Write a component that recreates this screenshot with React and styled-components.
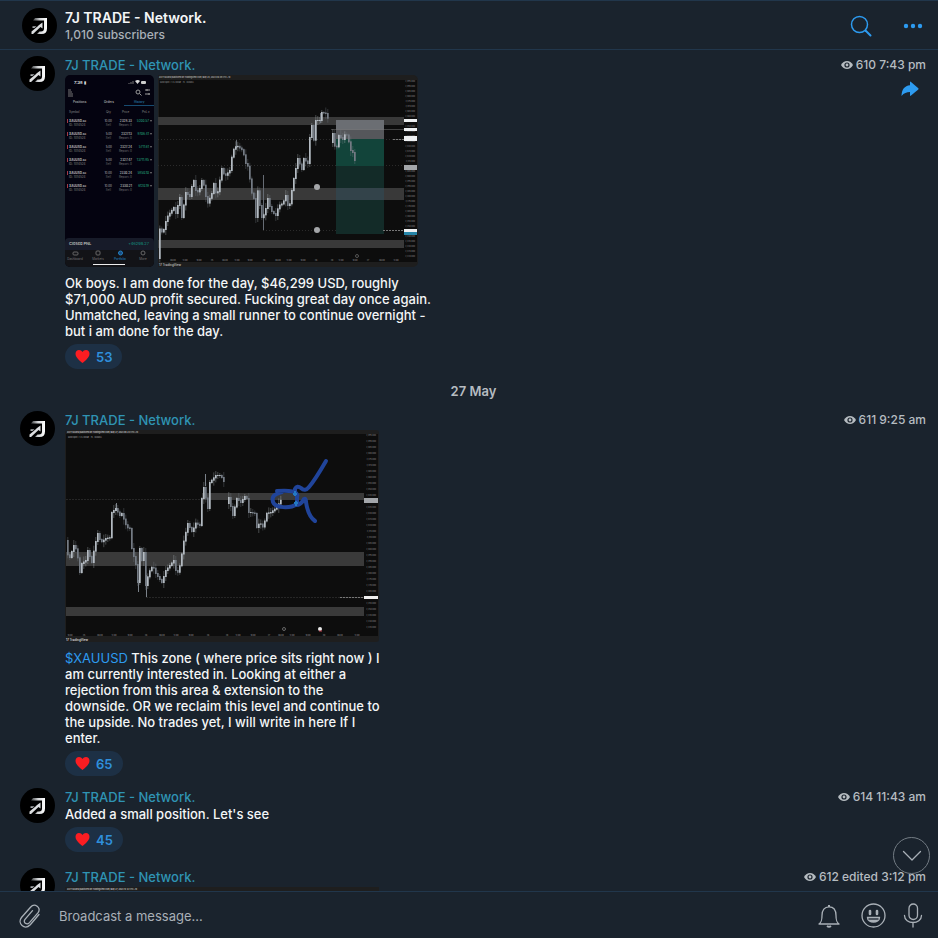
import React from "react";
import styled, { createGlobalStyle } from "styled-components";

const c = {
  bg: "#1a232d",
  line: "#21364b",
  teal: "#2f94b4",
  blue: "#2d9bf0",
  pale: "#a9b0b7",
  white: "#f4f6f7",
};

const GlobalStyle = createGlobalStyle`
  * { box-sizing: border-box; }
  body {
    margin: 0;
    background: ${c.bg};
    color: ${c.white};
    font-family: Inter, "Liberation Sans", sans-serif;
    font-size: 13px;
    line-height: 16px;
  }
  button, input { font: inherit; color: inherit; }
  p, h1, h2 { margin: 0; }
`;

const Page = styled.main`
  display: flex;
  flex-direction: column;
  height: 100vh;
`;

const Header = styled.header`
  display: flex;
  align-items: center;
  gap: 8px;
  flex: none;
  height: 50px;
  padding: 1px 11px 0 22px;
  border-top: 1px solid ${c.line};
  border-bottom: 1px solid ${c.line};
`;

const Heading = styled.div`
  flex: 1;
  min-width: 0;
`;

const Title = styled.h1`
  font-size: 14px;
  line-height: 18px;
  font-weight: 600;
`;

const Subtitle = styled.p`
  color: ${c.pale};
  font-size: 12px;
  font-weight: 500;
`;

const IconButton = styled.button`
  display: flex;
  align-items: center;
  justify-content: center;
  flex: none;
  width: 28px;
  height: ${(p) => p.$height || 32}px;
  margin-left: ${(p) => p.$gap || 0}px;
  padding: 0;
  border: 0;
  background: none;
  color: ${(p) => (p.$accent ? c.blue : c.pale)};
  cursor: pointer;
`;

const FeedArea = styled.section`
  position: relative;
  flex: 1;
  min-height: 0;
`;

const Feed = styled.div`
  height: 100%;
  padding-top: 6px;
  overflow: hidden;
`;

const Message = styled.article`
  display: flex;
  align-items: flex-start;
  gap: 10px;
  padding: 0 12px ${(p) => p.$space || 12}px 20px;
`;

const AvatarDrawing = styled.svg`
  flex: none;
  display: block;
  width: 35px;
  height: 35px;
`;

const Content = styled.div`
  flex: 1;
  min-width: 0;
`;

const Name = styled.h2`
  font-size: 13px;
  line-height: 18px;
  font-weight: 500;
  color: ${c.teal};
`;

const Body = styled.p`
  max-width: ${(p) => p.$width || 370}px;
  font-weight: 500;
`;

const Tag = styled.a`
  color: ${c.blue};
  font-weight: 400;
  text-decoration: none;
`;

const Media = styled.div`
  display: flex;
  gap: 4px;
  margin: 1px 0 8px;
`;

const Picture = styled.svg`
  display: block;
  flex: none;
  border-radius: ${(p) => p.$round || "0"};
  font-family: Inter, "Liberation Sans", sans-serif;
`;

const Reaction = styled.button`
  display: flex;
  align-items: center;
  gap: 6px;
  height: 25px;
  margin-top: 5px;
  padding: 0 10px;
  border: 0;
  border-radius: 13px;
  background: #1d3045;
  color: #2f8fdc;
  font-weight: 600;
  cursor: pointer;
`;

const Side = styled.div`
  display: flex;
  flex-direction: column;
  align-items: flex-end;
  gap: 2px;
`;

const ForwardSlot = styled.div`
  padding-right: 2px;
`;

const Stats = styled.div`
  display: flex;
  align-items: center;
  gap: 3px;
  font-size: 12px;
  line-height: 18px;
  font-weight: 500;
  color: #b6bcc1;
`;

const Day = styled.div`
  padding: 2px 0 12px 9px;
  text-align: center;
  color: #b6bcc1;
  font-size: 13px;
  font-weight: 600;
`;

const ScrollDown = styled.button`
  position: absolute;
  right: 8px;
  bottom: 17px;
  display: flex;
  align-items: center;
  justify-content: center;
  width: 37px;
  height: 37px;
  padding: 0;
  border: 1px solid #737c84;
  border-radius: 50%;
  background: none;
  color: ${c.pale};
  cursor: pointer;
`;

const Composer = styled.form`
  display: flex;
  align-items: center;
  flex: none;
  height: 47px;
  padding: 1px 11px 0 16px;
  border-top: 1px solid ${c.line};
`;

const MessageInput = styled.input`
  flex: 1;
  min-width: 0;
  margin-left: 15px;
  padding: 0;
  border: 0;
  outline: 0;
  background: none;
  &::placeholder { color: ${c.pale}; opacity: 1; }
`;

function Avatar() {
  return (
    <AvatarDrawing viewBox="0 0 35 35" aria-hidden="true">
      <defs>
        <linearGradient id="metal" x1="0" x2="1">
          <stop offset="0" stopColor="#3c3e40" />
          <stop offset="0.5" stopColor="#d4d6d8" />
          <stop offset="1" stopColor="#fff" />
        </linearGradient>
      </defs>
      <circle cx="17.500" cy="17.500" r="17.500" fill="#000" />
      <path d="M13 10h12v10.500q0 5.500-5.500 5.500H15l2.500-2.500h1.500q3 0 3-3v-8H11z" fill="url(#metal)" />
      <path d="M20.500 14.500v6l-2-1.500-7.500 7h-1.500v-2.500l6-5 1.500-1.500z" fill="#dcdee0" />
      <path d="M10.500 18.200h4l-2 1.800h-2z" fill="#a7aaad" />
    </AvatarDrawing>
  );
}

function Heart() {
  return (
    <svg width="15" height="15" viewBox="0 0 15 15" aria-hidden="true">
      <path d="M7.500 14C5 12 .5 8.500.5 4.800.5 2.500 2 1 4 1c1.500 0 2.800.8 3.500 2C8.200 1.800 9.500 1 11 1c2 0 3.500 1.500 3.500 3.800C14.500 8.500 10 12 7.500 14z" fill="#fb1d22" />
    </svg>
  );
}

function Eye() {
  return (
    <svg width="12" height="10" viewBox="0 0 12 10" aria-hidden="true">
      <path d="M0 5C1.500 2.200 3.500 1 6 1s4.500 1.200 6 4C10.500 7.800 8.500 9 6 9S1.500 7.800 0 5z" fill="#b6bcc1" />
      <circle cx="6" cy="5" r="2.600" fill={c.bg} />
      <circle cx="6" cy="5" r="1.400" fill="#b6bcc1" />
    </svg>
  );
}

function Views({ children }) {
  return (
    <Stats>
      <Eye />
      <span>{children}</span>
    </Stats>
  );
}

const trades = [
  ["10.00", "2328.33", "5200.57"],
  ["5.00", "2327.13", "9706.41"],
  ["5.00", "2327.24", "5711.61"],
  ["5.00", "2327.47", "13711.85"],
  ["10.00", "2330.24", "5850.10"],
  ["10.00", "2330.21", "6120.19"],
];

function PhonePicture() {
  return (
    <Picture $round="5px" width="89" height="192" viewBox="0 0 89 192" role="img" aria-label="Closed trades on a phone">
      <rect width="89" height="192" fill="#040310" />
      <text x="9" y="9" fontSize="4" fontWeight="700" fill="#ddd">7:38 ▮</text>
      <path d="M64 9v-1M66 9V7M68 9V6" stroke="#777" />
      <path d="M70 6q3-2 5 0l-2.500 3z" fill="#ddd" />
      <rect x="76" y="6" width="5" height="3" rx="1" fill="#ccc" />
      <path d="M3 15h3M3 17h4M3 19h5M3 21h5" stroke="#777" />
      <g fill="none" stroke="#999">
        <circle cx="73" cy="17" r="2" />
        <path d="M74.500 18.500l2 2M80 15h5M80 19h5M82 14v2M84 18v2" />
      </g>
      <g fontSize="3" fontWeight="600" fill="#aaa">
        <text x="8" y="28">Positions</text>
        <text x="39" y="28">Orders</text>
        <text x="69" y="28" fill="#2679a6">History</text>
      </g>
      <path d="M59 30.500h30" stroke="#174b70" />
      <g fontSize="3" fill="#888">
        <text x="4" y="38">Symbol</text>
        <text x="41" y="38">Qty</text>
        <text x="57" y="38">Price</text>
        <text x="77" y="38">PnL ▾</text>
      </g>
      {trades.map(([qty, price, gain], i) => (
        <g key={i} transform={`translate(0 ${46 + i * 13})`} fontSize="3">
          <path d="M2.500-2v4" stroke="#a33a45" />
          <text x="4" y="1" fontWeight="700" fill="#bbb">XAUUSD.sc</text>
          <text x="4" y="5" fill="#888">ID: 1014524</text>
          <text x="47" y="1" textAnchor="end" fill="#bbb">{qty}</text>
          <text x="46" y="5" textAnchor="end" fill="#666">Sell</text>
          <text x="67" y="1" textAnchor="end" fontWeight="600" fill="#bbb">{price}</text>
          <text x="67" y="5" textAnchor="end" fill="#777">Report: 0</text>
          <text x="84" y="1" textAnchor="end" fontWeight="600" fill="#20906e">{gain}</text>
          <path d="M85-1h2l-1 2z" fill="#777" />
        </g>
      ))}
      <path d="M0 167q0-4 4-4h81q4 0 4 4v8H0z" fill="#171b29" />
      <rect y="175" width="89" height="17" fill="#121317" />
      <text x="4" y="170" fontSize="4" fontWeight="600" fill="#bbb">Closed PNL</text>
      <text x="84" y="170" fontSize="4" textAnchor="end" fill="#149783">+46299.27</text>
      <g fill="none" stroke="#666">
        <rect x="8" y="177" width="5" height="3" rx="1" />
        <rect x="31" y="176" width="4" height="4" rx="1" />
        <circle cx="55.500" cy="178" r="2" fill="#1a4d82" stroke="#2483c4" />
        <circle cx="78" cy="178" r="2" />
      </g>
      <g fontSize="3" fill="#777" textAnchor="middle">
        <text x="10" y="185">Dashboard</text>
        <text x="33" y="185">Markets</text>
        <text x="55" y="185" fill="#238bd0">Portfolio</text>
        <text x="78" y="185">More</text>
      </g>
      <rect x="28" y="189" width="32" height="1" fill="#eee" />
    </Picture>
  );
}

const firstRun = [
  [[1,183],[2,152],[6,158],[10,142],[17,132],[19,138],[23,122],[25,142],[29,117],[34,122],[36,100],[39,115],[42,117],[45,105],[48,112],[50,130],[55,118],[57,108],[60,122],[65,93],[68,101],[73,95],[76,75],[80,70],[86,75],[89,88],[92,92],[94,115],[97,123],[99,142],[100,108],[103,130],[104,112],[105,142],[108,138],[111,123],[114,135],[119,140],[122,130],[126,128],[129,120],[132,135],[135,115],[137,103],[141,83],[145,94],[147,83],[151,88],[153,62],[155,50],[158,72],[159,45],[164,45],[165,37],[169,38],[172,45]],
  [[174,67],[176,58],[179,77],[182,60],[186,64],[189,57],[191,62],[194,75],[197,78],[199,92]],
];

const secondRun = [
  [[1,110],[2,123],[5,127],[9,115],[12,120],[15,142],[17,133],[21,130],[23,120],[27,132],[30,115],[33,103],[36,112],[41,108],[46,107],[47,82],[51,78],[55,85],[57,83],[62,97],[65,98],[67,118],[72,138],[73,152],[75,118],[77,130],[79,122],[81,155],[84,142],[88,135],[91,143],[97,152],[101,140],[109,130],[112,145],[116,132],[118,115],[123,93],[128,103],[130,92],[135,95],[137,68],[139,57],[143,78],[145,52],[151,45],[156,45],[160,53]],
  [[162,73],[164,67],[168,85],[172,68],[176,72],[180,66],[182,68],[184,82],[186,82],[190,83],[192,97],[195,92],[199,98],[201,83],[206,82],[212,77],[217,68]],
];

function priceAt(points, x) {
  const i = points.findIndex((p) => p[0] >= x);
  if (i <= 0) return points[0][1];
  const [x0, y0] = points[i - 1];
  const [x1, y1] = points[i];
  return y0 + ((y1 - y0) * (x - x0)) / (x1 - x0);
}

function Candles({ runs }) {
  const bars = [];
  runs.forEach((points) => {
    const end = points[points.length - 1][0];
    for (let x = points[0][0]; x + 2 <= end; x += 2) {
      const open = priceAt(points, x);
      const close = priceAt(points, x + 2);
      const wick = 1 + ((x * 7) % 5);
      bars.push({ x, top: Math.min(open, close), size: Math.abs(open - close) + 1, wick, up: close <= open });
    }
  });
  return bars.map((b) => (
    <g key={b.x} fill={b.up ? "#b4bbc2" : "#747b84"}>
      <rect x={b.x + 0.5} y={b.top - b.wick} width="0.700" height={b.size + b.wick * 2} opacity="0.500" />
      <rect x={b.x} y={b.top} width="1.700" height={b.size} />
    </g>
  ));
}

function PriceScale({ x, from, to, step }) {
  const marks = [];
  for (let y = from; y < to; y += step) marks.push(y);
  return (
    <g fontSize="2" fill="#8a8a8a" textAnchor="end">
      {marks.map((y, i) => (
        <text key={y} x={x} y={y}>{`2,${395 - i * 5}.000`}</text>
      ))}
    </g>
  );
}

function TimeScale({ y, marks }) {
  return (
    <g fontSize="2" fill="#999" textAnchor="middle">
      {marks.map(([x, label]) => (
        <text key={x} x={x} y={y}>{label}</text>
      ))}
    </g>
  );
}

function FirstChart() {
  return (
    <Picture $round="0 5px 5px 0" width="260" height="192" viewBox="0 0 260 192" role="img" aria-label="Gold price chart with a short position">
      <rect width="260" height="192" fill="#1e1e1e" />
      <rect x="1" y="5" width="258" height="182" fill="#0d0d0d" />
      <text x="1" y="3" fontSize="2" fontWeight="600" fill="#bbb">ZAYTRADER published on TradingView.com, May 26, 2023 09:38 UTC+10</text>
      <text x="2" y="8" fontSize="2" fill="#999">Gold Spot / U.S. Dollar · 15 · OANDA</text>
      <g fill="#393939">
        <rect x="0" y="42" width="246" height="8" />
        <rect x="0" y="113" width="246" height="12" />
        <rect x="0" y="165" width="246" height="8" />
      </g>
      <path d="M0 64.500h246M0 90.500h246M105 155.500h141" stroke="#2b2b2b" strokeDasharray="1 2" />
      <rect x="178" y="45" width="48" height="20" fill="#6b6e73" />
      <rect x="178" y="55" width="48" height="9" fill="#55575b" />
      <rect x="178" y="64" width="48" height="27" fill="#12443a" />
      <rect x="178" y="91" width="48" height="68" fill="#132b28" />
      <rect x="178" y="113" width="48" height="12" fill="#33434a" />
      <path d="M105.500 100v55M78.500 65v8M162.500 38v10" stroke="#666c74" />
      <Candles runs={firstRun} />
      <path d="M173 54.500h73" stroke="#777" opacity="0.500" />
      <circle cx="159" cy="112" r="3" fill="#a4a6a9" />
      <circle cx="159" cy="155" r="3" fill="#a4a6a9" />
      <PriceScale x={257} from={7} to={184} step={5} />
      <g fill="#eef0f2">
        <rect x="246" y="44" width="13" height="3" />
        <rect x="246" y="53" width="13" height="3" />
        <rect x="246" y="61" width="13" height="5" />
        <rect x="246" y="90" width="13" height="5" fill="#a3a6aa" />
        <rect x="246" y="154" width="13" height="3" />
        <rect x="246" y="157" width="13" height="3" fill="#2685a8" />
      </g>
      <path d="M235 64.500h11M225 155.500h21" stroke="#777" strokeDasharray="2 1" />
      <circle cx="199" cy="181" r="1.500" fill="none" stroke="#555" />
      <TimeScale y={186} marks={[[15, "06:00"], [27, "12:00"], [41, "18:00"], [54, "25"], [67, "06:00"], [79, "12:00"], [92, "18:00"], [106, "26"], [120, "06:00"], [131, "12:00"], [145, "18:00"], [158, "26"], [174, "28"], [183, "12:00"], [197, "18:00"], [210, "27"], [224, "06:00"], [238, "12:00"]]} />
      <text x="1" y="191" fontSize="3" fontWeight="600" fill="#bbb">17 TradingView</text>
    </Picture>
  );
}

function SecondChart() {
  return (
    <Picture $round="3px" width="314" height="212" viewBox="0 0 314 212" role="img" aria-label="Gold price chart with a marked zone">
      <rect width="314" height="212" fill="#1e1e1e" />
      <rect x="1" y="4" width="312" height="202" fill="#0d0d0d" />
      <text x="2" y="3" fontSize="2" fontWeight="600" fill="#ccc">ZAYTRADER published on TradingView.com, May 27, 2023 09:24 UTC+10</text>
      <text x="3" y="8" fontSize="2" fill="#aaa">Gold Spot / U.S. Dollar · 15 · OANDA</text>
      <g fill="#3a3a3a">
        <rect x="137" y="63" width="162" height="7" />
        <rect x="1" y="122" width="298" height="14" />
        <rect x="1" y="177" width="298" height="9" />
      </g>
      <path d="M1 69.500h136M81 167.500h218" stroke="#262626" strokeDasharray="2 1" />
      <path d="M73.500 150v12M81.500 145v22M51.500 73v8M140.500 44v12" stroke="#7b828a" />
      <g transform="translate(1 0)">
        <Candles runs={secondRun} />
      </g>
      <PriceScale x={311} from={6} to={204} step={6} />
      <rect x="299" y="68" width="14" height="5" fill="#a3a6aa" />
      <rect x="299" y="166" width="14" height="3" fill="#eee" />
      <path d="M275 167.500h23" stroke="#777" strokeDasharray="2 1" />
      <g transform="translate(1 0)">
        <g fill="none" stroke="#20449a" strokeWidth="4" strokeLinecap="round" strokeLinejoin="round">
          <path d="M211 61c12-1 22 0 20 6v7c-7 5-22 4-24-2-2-7 3-8 9-10" />
          <path d="M229 64v-5q2-4 6-1 4 4 8-1 6-7 17-26" />
          <path d="M230 75q5 0 8-6 2-1 2 3 2 14 9 19" />
        </g>
        <path d="M229 61v5M227 64h4M230 71v5M228 73h4" stroke="#2379c4" strokeWidth="2" />
      </g>
      <circle cx="219" cy="199" r="1.500" fill="none" stroke="#666" />
      <circle cx="255" cy="199" r="2" fill="#e9e9e9" />
      <path d="M254 201h3" stroke="#c23d4a" />
      <TimeScale y={206} marks={[[5, "18:00"], [19, "25"], [35, "06:00"], [49, "12:00"], [65, "18:00"], [81, "26"], [97, "06:00"], [111, "12:00"], [126, "18:00"], [143, "26"], [162, "28"], [173, "12:00"], [188, "18:00"], [204, "27"], [216, "06:00"], [227, "12:00"], [243, "18:00"], [259, "30"], [275, "06:00"], [292, "12:00"]]} />
      <text x="1" y="211" fontSize="3" fontWeight="600" fill="#ddd">17 TradingView</text>
    </Picture>
  );
}

function NextChart() {
  return (
    <Picture width="314" height="212" viewBox="0 0 314 212" role="img" aria-label="Gold price chart">
      <rect width="314" height="212" fill="#1e1e1e" />
      <text x="2" y="3" fontSize="2" fontWeight="600" fill="#ccc">ZAYTRADER published on TradingView.com, May 27, 2023 15:12 UTC+10</text>
    </Picture>
  );
}

export default function App() {
  return (
    <Page>
      <GlobalStyle />
      <Header>
        <Avatar />
        <Heading>
          <Title>7J TRADE - Network.</Title>
          <Subtitle>1,010 subscribers</Subtitle>
        </Heading>
        <IconButton $accent aria-label="Search">
          <svg width="22" height="22" viewBox="0 0 22 22" fill="none" stroke="currentColor" aria-hidden="true">
            <circle cx="9.500" cy="9.500" r="8" strokeWidth="1.500" />
            <path d="M15.500 15.500l5 5" strokeWidth="2" strokeLinecap="round" />
          </svg>
        </IconButton>
        <IconButton $accent $gap={16} aria-label="More">
          <svg width="20" height="6" viewBox="0 0 20 6" fill="currentColor" aria-hidden="true">
            <circle cx="3" cy="3" r="2.200" />
            <circle cx="10" cy="3" r="2.200" />
            <circle cx="17" cy="3" r="2.200" />
          </svg>
        </IconButton>
      </Header>

      <FeedArea>
        <Feed>
          <Message>
            <Avatar />
            <Content>
              <Name>7J TRADE - Network.</Name>
              <Media>
                <PhonePicture />
                <FirstChart />
              </Media>
              <Body>
                Ok boys. I am done for the day, $46,299 USD, roughly $71,000 AUD profit secured. Fucking great day once
                again. Unmatched, leaving a small runner to continue overnight - but i am done for the day.
              </Body>
              <Reaction aria-label="53 hearts"><Heart />53</Reaction>
            </Content>
            <Side>
              <Views>610 7:43 pm</Views>
              <ForwardSlot>
                <IconButton $accent $height={26} aria-label="Forward">
                  <svg width="18" height="16" viewBox="0 0 18 15" fill="currentColor" aria-hidden="true">
                    <path d="M9 .8v3C3.500 4.300.8 8 .5 14.500 3 11.500 5.500 10.500 9 10.500v3.200q0 1.200 1 .4L17.300 8q.5-.6 0-1.200L10 .4q-1-.8-1 .4z" />
                  </svg>
                </IconButton>
              </ForwardSlot>
            </Side>
          </Message>

          <Day>27 May</Day>

          <Message>
            <Avatar />
            <Content>
              <Name>7J TRADE - Network.</Name>
              <Media>
                <SecondChart />
              </Media>
              <Body $width={318}>
                <Tag href="#xauusd">$XAUUSD</Tag> This zone ( where price sits right now ) I am currently interested in.
                Looking at either a rejection from this area &amp; extension to the downside. OR we reclaim this level and
                continue to the upside. No trades yet, I will write in here If I enter.
              </Body>
              <Reaction aria-label="65 hearts"><Heart />65</Reaction>
            </Content>
            <Views>611 9:25 am</Views>
          </Message>

          <Message $space={16}>
            <Avatar />
            <Content>
              <Name>7J TRADE - Network.</Name>
              <Body>Added a small position. Let's see</Body>
              <Reaction aria-label="45 hearts"><Heart />45</Reaction>
            </Content>
            <Views>614 11:43 am</Views>
          </Message>

          <Message>
            <Avatar />
            <Content>
              <Name>7J TRADE - Network.</Name>
              <Media>
                <NextChart />
              </Media>
            </Content>
            <Views>612 edited 3:12 pm</Views>
          </Message>
        </Feed>
        <ScrollDown aria-label="Scroll to latest">
          <svg width="20" height="12" viewBox="0 0 20 12" fill="none" stroke="currentColor" strokeWidth="1.300" strokeLinecap="round" strokeLinejoin="round" aria-hidden="true">
            <path d="M1.500 1.500L10 10l8.500-8.500" />
          </svg>
        </ScrollDown>
      </FeedArea>

      <Composer onSubmit={(e) => e.preventDefault()}>
        <IconButton type="button" aria-label="Attach">
          <svg width="22" height="24" viewBox="0 0 22 24" fill="none" stroke="currentColor" strokeWidth="1.300" strokeLinecap="round" aria-hidden="true">
            <path d="M20 10.500l-8.700 10.200C5.500 26.500-2 19.500 2.500 13.500L11.500 3.200c4-4.700 11.300.2 7.600 5.500L10.500 18.600c-2.800 3-6.800-.2-4.500-3.200l7.500-8.700" />
          </svg>
        </IconButton>
        <MessageInput aria-label="Broadcast a message" placeholder="Broadcast a message..." />
        <IconButton type="button" aria-label="Notifications">
          <svg width="22" height="24" viewBox="0 0 22 24" fill="none" stroke="currentColor" strokeWidth="1.300" strokeLinejoin="round" aria-hidden="true">
            <path d="M1 20c2.500-2 3-3.500 3-8.500C4 6 6.500 2.800 11 2.800s7 3.200 7 8.700c0 5 .5 6.500 3 8.500z" />
            <path d="M11 1v2M9 22q2 1.500 4 0" strokeWidth="2" />
          </svg>
        </IconButton>
        <IconButton type="button" $gap={16} aria-label="Emoji">
          <svg width="25" height="25" viewBox="0 0 25 25" fill="none" stroke="currentColor" strokeWidth="1.300" aria-hidden="true">
            <circle cx="12.500" cy="12.500" r="11.500" />
            <path d="M6.500 14.500h12c0 6-12 6-12 0z" fill="currentColor" />
            <path d="M7.500 16h10" stroke={c.bg} />
            <path d="M9 8v3M16 8v3" strokeWidth="2.600" strokeLinecap="round" />
          </svg>
        </IconButton>
        <IconButton type="button" $gap={12} aria-label="Record voice">
          <svg width="20" height="25" viewBox="0 0 20 25" fill="none" stroke="currentColor" strokeWidth="1.300" strokeLinecap="round" aria-hidden="true">
            <rect x="6" y="1" width="8.500" height="15.500" rx="4.250" />
            <path d="M1.500 12.500c0 9.300 17 9.300 17 0M10 19.500V24" />
          </svg>
        </IconButton>
      </Composer>
    </Page>
  );
}
